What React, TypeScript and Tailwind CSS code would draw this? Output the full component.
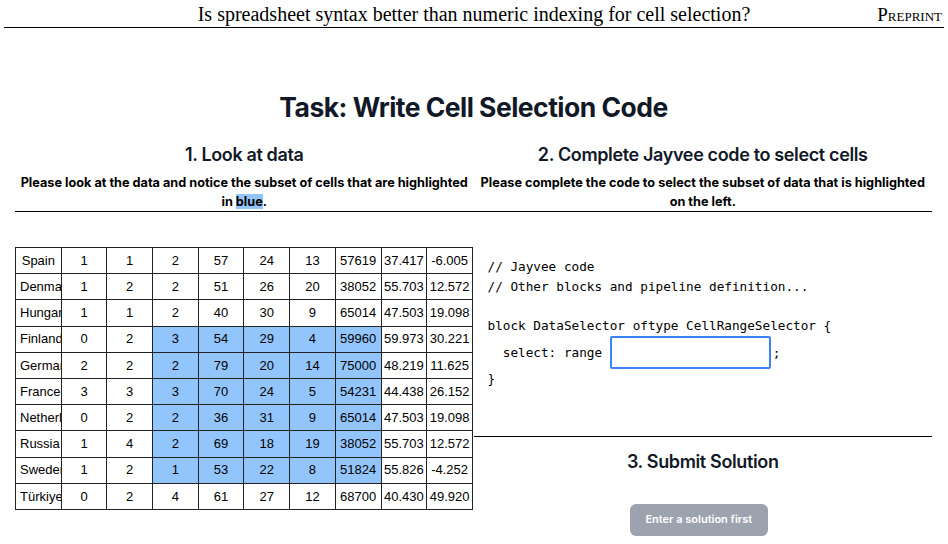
import { useState } from "react";

const ROWS: (string | number)[][] = [
  ["Spain", 1, 1, 2, 57, 24, 13, 57619, "37.417", "-6.005"],
  ["Denmark", 1, 2, 2, 51, 26, 20, 38052, "55.703", "12.572"],
  ["Hungary", 1, 1, 2, 40, 30, 9, 65014, "47.503", "19.098"],
  ["Finland", 0, 2, 3, 54, 29, 4, 59960, "59.973", "30.221"],
  ["Germany", 2, 2, 2, 79, 20, 14, 75000, "48.219", "11.625"],
  ["France", 3, 3, 3, 70, 24, 5, 54231, "44.438", "26.152"],
  ["Netherlands", 0, 2, 2, 36, 31, 9, 65014, "47.503", "19.098"],
  ["Russia", 1, 4, 2, 69, 18, 19, 38052, "55.703", "12.572"],
  ["Sweden", 1, 2, 1, 53, 22, 8, 51824, "55.826", "-4.252"],
  ["Türkiye", 0, 2, 4, 61, 27, 12, 68700, "40.430", "49.920"],
];

// highlighted block: rows 3..8, cols 3..7
const isSel = (r: number, c: number) => r >= 3 && r <= 8 && c >= 3 && c <= 7;

export default function App() {
  const [value, setValue] = useState("");

  return (
    <div className="w-[948px] h-[544px] overflow-hidden bg-white text-black">
      {/* paper header */}
      <div className="mx-[4px] h-[28px] border-b-[1.5px] border-black flex items-end pb-[3px] font-['Liberation_Serif',serif]">
        <div className="w-[84px]" />
        <div className="flex-1 text-center text-[20px] leading-none">
          Is spreadsheet syntax better than numeric indexing for cell selection?
        </div>
        <div className="w-[84px] text-right text-[19px] leading-none [font-variant:small-caps] pr-[2px]">Preprint</div>
      </div>

      <div className="pl-[15px] pr-[16px] font-['Inter',sans-serif]">
        <h1 className="mt-[62px] text-center text-[26.5px] leading-[34px] font-bold tracking-[-0.02em] text-[#111827]">
          Task: Write Cell Selection Code
        </h1>

        <div className="mt-[18px] grid grid-cols-2">
          {/* left header */}
          <div className="border-b-[1.5px] border-black text-center">
            <h2 className="text-[18px] leading-[26px] font-semibold tracking-[-0.02em] text-[#111827]">1. Look at data</h2>
            <p className="mt-[5px] text-[12.7px] leading-[19px] font-bold px-[2px]">
              Please look at the data and notice the subset of cells that are highlighted in{" "}
              <span className="bg-[#93c5fd]">blue</span>.
            </p>
          </div>
          {/* right header */}
          <div className="border-b-[1.5px] border-black text-center">
            <h2 className="text-[18px] leading-[26px] font-semibold tracking-[-0.02em] text-[#111827]">
              2. Complete Jayvee code to select cells
            </h2>
            <p className="mt-[5px] text-[12.7px] leading-[19px] font-bold px-[2px]">
              Please complete the code to select the subset of data that is highlighted on the left.
            </p>
          </div>

          {/* data table */}
          <div className="pt-[35px]">
            <table className="table-fixed w-[458px] border-collapse font-['Liberation_Sans',sans-serif] text-[13px]">
              <tbody>
                {ROWS.map((row, r) => (
                  <tr key={r} className="h-[26.2px]">
                    {row.map((cell, c) => (
                      <td
                        key={c}
                        className={`border border-[#222] p-0 text-center whitespace-nowrap ${
                          isSel(r, c) ? "bg-[#93c5fd]" : ""
                        }`}
                      >
                        <div className={`overflow-hidden ${c === 0 ? "px-[4px]" : "px-[1px]"}`}>{cell}</div>
                      </td>
                    ))}
                  </tr>
                ))}
              </tbody>
            </table>
          </div>

          {/* code + submit */}
          <div className="flex flex-col font-['DejaVu_Sans_Mono',monospace] text-[12.7px]">
            <pre className="mt-[45px] pl-[14px] leading-[19.5px] font-['DejaVu_Sans_Mono',monospace]">
{`// Jayvee code
// Other blocks and pipeline definition...

block DataSelector oftype CellRangeSelector {`}
            </pre>
            <div className="mt-[1px] pl-[14px] flex items-center h-[33px]">
              <span className="whitespace-pre">  select: range </span>
              <input
                value={value}
                onChange={e => setValue(e.target.value)}
                className="w-[161px] h-[33px] border-2 border-[#3b82f6] rounded-[2px] outline-none px-2"
              />
              <span className="ml-[2px]">;</span>
            </div>
            <pre className="pl-[14px] leading-[19.5px] font-['DejaVu_Sans_Mono',monospace]">{"}"}</pre>

            <div className="mt-[47px] border-t-[1.5px] border-black flex flex-col items-center font-['Inter',sans-serif]">
              <h2 className="mt-[12px] text-[18px] leading-[26px] font-semibold tracking-[-0.02em] text-[#111827]">
                3. Submit Solution
              </h2>
              <button
                disabled={!value}
                className="mt-[29px] mr-[8px] h-[32px] w-[138px] rounded-md bg-[#9ca3af] text-white text-[11px] font-semibold"
              >
                Enter a solution first
              </button>
            </div>
          </div>
        </div>
      </div>
    </div>
  );
}
